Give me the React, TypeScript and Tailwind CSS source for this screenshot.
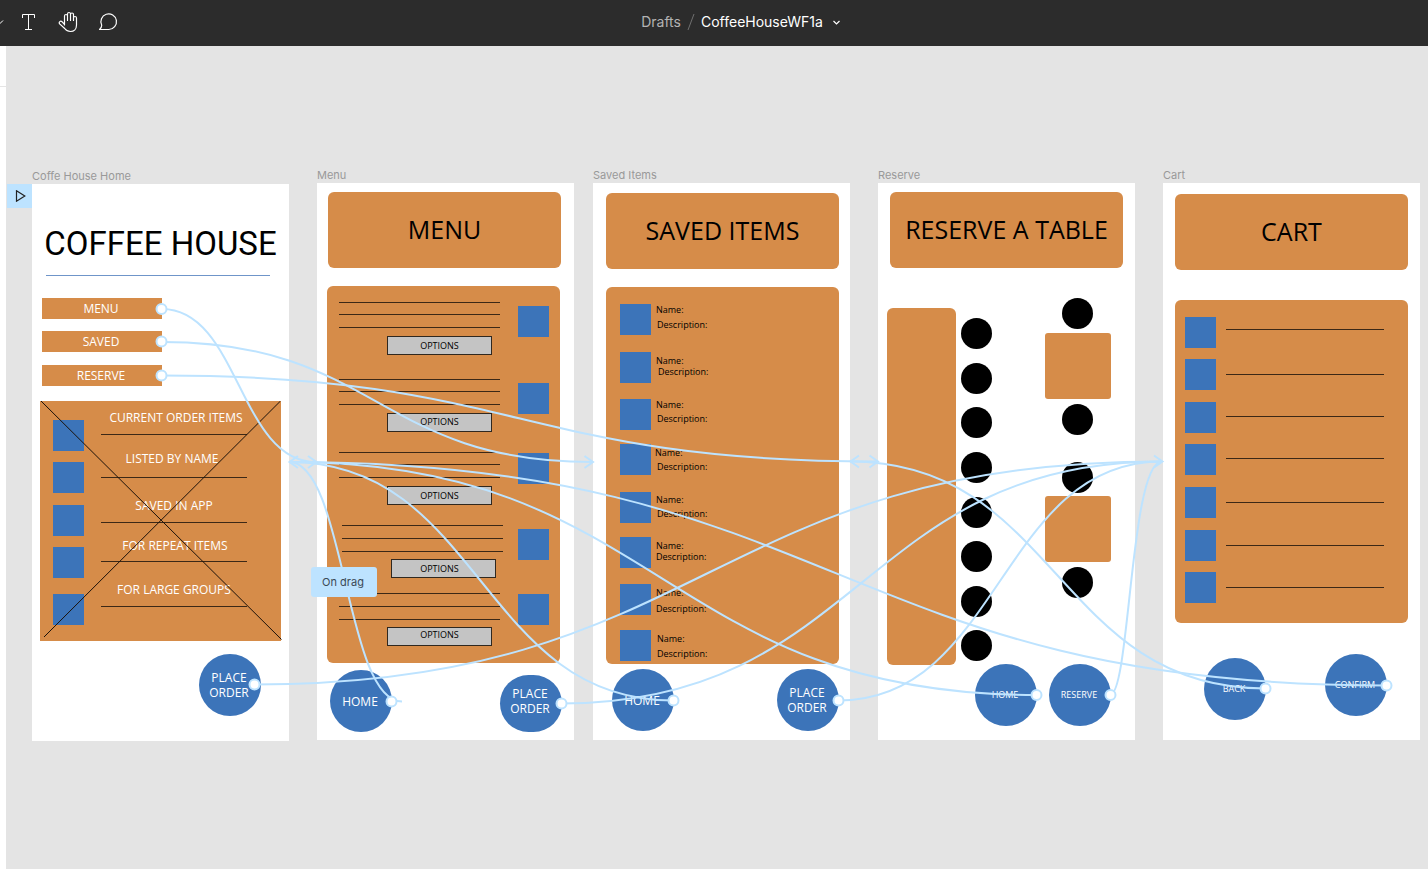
import type { ReactNode } from 'react';

type Point = [number, number];

const place = (x: number, y: number, w?: number, h?: number) => ({
  left: x,
  top: y,
  width: w,
  height: h,
});

function Artboard({ name, x, y, children }: { name: string; x: number; y: number; children: ReactNode }) {
  return (
    <section className="absolute h-[557px] w-[257px] bg-white" style={place(x, y)} aria-label={name}>
      <h2 className="absolute -top-4 left-0 font-[Inter,sans-serif] text-[11px] leading-4 whitespace-nowrap text-[#999999]">
        {name}
      </h2>
      {children}
    </section>
  );
}

function Block({ x, y, w, h, className }: { x: number; y: number; w: number; h: number; className: string }) {
  return <div className={`absolute ${className}`} style={place(x, y, w, h)} />;
}

function Squares({ x, ys }: { x: number; ys: number[] }) {
  return ys.map((y) => <Block key={y} x={x} y={y} w={31} h={31} className="bg-[#3c74b9]" />);
}

function Rules({ x, w, ys }: { x: number; w: number; ys: number[] }) {
  return ys.map((y) => <Block key={y} x={x} y={y} w={w} h={1} className="bg-[#3c2816]" />);
}

function Banner({ x, y, children }: { x: number; y: number; children: string }) {
  return (
    <h3
      className="absolute flex h-[76px] w-[233px] items-center justify-center rounded-md bg-[#d68c49] pb-0.5 text-[25px] leading-8 whitespace-nowrap text-black"
      style={place(x, y)}
    >
      {children}
    </h3>
  );
}

function RoundButton({
  x,
  y,
  h = 62,
  small = false,
  className = '',
  children,
}: {
  x: number;
  y: number;
  h?: number;
  small?: boolean;
  className?: string;
  children: ReactNode;
}) {
  return (
    <button
      type="button"
      className={`absolute flex w-[62px] items-center justify-center rounded-full bg-[#3c74b9] pr-0.5 text-center text-white ${
        small ? 'text-[9px] leading-3' : 'text-[12px] leading-[15px]'
      } ${className}`}
      style={place(x, y, undefined, h)}
    >
      <span>{children}</span>
    </button>
  );
}

const navBars = [
  { label: 'MENU', y: 114 },
  { label: 'SAVED', y: 147 },
  { label: 'RESERVE', y: 181 },
];

const orderNotes = [
  { text: 'CURRENT ORDER ITEMS', x: 144, y: 234 },
  { text: 'LISTED BY NAME', x: 140, y: 275 },
  { text: 'SAVED IN APP', x: 142, y: 322 },
  { text: 'FOR REPEAT ITEMS', x: 143, y: 362 },
  { text: 'FOR LARGE GROUPS', x: 142, y: 406 },
];

function HomeBoard() {
  return (
    <Artboard name="Coffe House Home" x={26} y={138}>
      <h3 className="absolute top-10 right-0 left-0 text-center font-[Roboto,sans-serif] text-[33px] leading-10 whitespace-nowrap text-black">
        COFFEE HOUSE
      </h3>
      <Block x={14} y={91} w={224} h={1} className="bg-[#6f95c9]" />
      {navBars.map((bar) => (
        <button
          key={bar.label}
          type="button"
          className="absolute h-[21px] w-[120px] bg-[#d68c49] pr-0.5 text-center text-[12px] leading-[21px] text-white"
          style={place(10, bar.y)}
        >
          {bar.label}
        </button>
      ))}
      <Block x={8} y={217} w={241} h={240} className="bg-[#d68c49]" />
      <Squares x={21} ys={[236, 278, 321, 363, 410]} />
      <Rules x={69} w={146} ys={[250, 293, 338, 377, 422]} />
      {orderNotes.map((note) => (
        <p
          key={note.text}
          className="absolute w-40 text-center text-[12px] leading-4 whitespace-nowrap text-white"
          style={place(note.x - 80, note.y - 8)}
        >
          {note.text}
        </p>
      ))}
      <svg className="absolute top-[217px] left-2" width="242" height="240" viewBox="0 0 242 240" fill="none" stroke="#1c120a" aria-hidden="true">
        <path d="M1 0L241.500 238.500M240.500 0L4 236" />
      </svg>
      <RoundButton x={167} y={470}>
        PLACE
        <br />
        ORDER
      </RoundButton>
    </Artboard>
  );
}

const optionBoxes = [
  { x: 70, y: 153, pad: '' },
  { x: 70, y: 230, pad: 'pb-0.5' },
  { x: 70, y: 303, pad: '' },
  { x: 74, y: 376, pad: 'pr-2' },
  { x: 70, y: 444, pad: 'pb-1' },
];

function MenuBoard() {
  return (
    <Artboard name="Menu" x={311} y={137}>
      <Banner x={11} y={9}>MENU</Banner>
      <Block x={10} y={103} w={233} h={377} className="rounded-md bg-[#d68c49]" />
      <Rules x={22} w={161} ys={[119, 131, 144, 196, 208, 221, 269, 281, 294, 410, 423, 436]} />
      <Rules x={25} w={161} ys={[342, 355, 368]} />
      <Squares x={201} ys={[123, 200, 270, 346, 411]} />
      {optionBoxes.map((box) => (
        <button
          key={box.y}
          type="button"
          className={`absolute flex h-[19px] w-[105px] items-center justify-center border border-[#30281f] bg-[#c4c4c4] text-[9px] leading-3 text-black ${box.pad}`}
          style={place(box.x, box.y)}
        >
          OPTIONS
        </button>
      ))}
      <RoundButton x={13} y={487}>HOME</RoundButton>
      <RoundButton x={183} y={492} h={57} className="pb-1.5">
        PLACE
        <br />
        ORDER
      </RoundButton>
    </Artboard>
  );
}

const savedRows = [
  { square: 121, name: [63, 127], description: [64, 142] },
  { square: 169, name: [63, 178], description: [65, 189] },
  { square: 216, name: [63, 222], description: [64, 236] },
  { square: 261, name: [62, 270], description: [64, 284] },
  { square: 309, name: [63, 317], description: [64, 331] },
  { square: 354, name: [63, 363], description: [63, 374] },
  { square: 401, name: [63, 410], description: [63, 426] },
  { square: 447, name: [64, 456], description: [64, 471] },
];

function SavedBoard() {
  return (
    <Artboard name="Saved Items" x={587} y={137}>
      <Banner x={13} y={10}>SAVED ITEMS</Banner>
      <Block x={13} y={104} w={233} h={377} className="rounded-md bg-[#d68c49]" />
      <Squares x={27} ys={savedRows.map((row) => row.square)} />
      {savedRows.map((row) => (
        <div key={row.square} className="text-[9px] leading-3 text-black">
          <p className="absolute" style={place(row.name[0], row.name[1] - 6)}>Name:</p>
          <p className="absolute" style={place(row.description[0], row.description[1] - 6)}>Description:</p>
        </div>
      ))}
      <RoundButton x={19} y={486}>HOME</RoundButton>
      <RoundButton x={184} y={486}>
        PLACE
        <br />
        ORDER
      </RoundButton>
    </Artboard>
  );
}

const stools: Point[] = [
  [83, 135], [83, 180], [83, 224], [83, 269], [83, 314], [83, 358], [83, 403], [83, 447],
  [184, 115], [184, 221], [184, 279], [184, 384],
];

function ReserveBoard() {
  return (
    <Artboard name="Reserve" x={872} y={137}>
      <Banner x={12} y={9}>RESERVE A TABLE</Banner>
      <Block x={9} y={125} w={69} h={357} className="rounded-md bg-[#d68c49]" />
      {stools.map(([x, y]) => (
        <Block key={`${x}-${y}`} x={x} y={y} w={31} h={31} className="rounded-full bg-black" />
      ))}
      <Block x={167} y={150} w={66} h={66} className="rounded-[3px] bg-[#d68c49]" />
      <Block x={167} y={313} w={66} h={66} className="rounded-[3px] bg-[#d68c49]" />
      <RoundButton x={97} y={481} small>HOME</RoundButton>
      <RoundButton x={171} y={481} small>RESERVE</RoundButton>
    </Artboard>
  );
}

function CartBoard() {
  return (
    <Artboard name="Cart" x={1157} y={137}>
      <Banner x={12} y={11}>CART</Banner>
      <Block x={12} y={117} w={233} h={323} className="rounded-md bg-[#d68c49]" />
      <Squares x={22} ys={[134, 176, 219, 261, 304, 347, 389]} />
      <Rules x={63} w={158} ys={[146, 191, 233, 275, 319, 362, 404]} />
      <RoundButton x={41} y={475} small>BACK</RoundButton>
      <RoundButton x={162} y={471} small>CONFIRM</RoundButton>
    </Artboard>
  );
}

const wires = [
  'M162 309C239 309 239 462 316 462',
  'M162 342C377 342 377 462 593 462',
  'M162 375.500C520 375.500 520 461.500 878 461.500',
  'M254 684.500C708 684.500 708 461.500 1162 461.500',
  'M402 701.500C345 701.500 345 462 289 462',
  'M561 703.500C862 703.500 862 461.500 1162 461.500',
  'M673 700.500C481 700.500 481 462 289 462',
  'M838 700.500C1000 700.500 1000 461.500 1162 461.500',
  'M1036 695C662 695 662 462 289 462',
  'M1110 695C1130 695 1130 461.500 1162 461.500',
  'M1265 688.500C1057 688.500 1057 461.500 850 461.500',
  'M1386 685.500C837 685.500 837 462 289 462',
];

const arrowHeads = [
  'M298 456L289.500 462L298 468',
  'M308 456L316.500 462L308 468',
  'M584.500 456L593 462L584.500 468',
  'M859 455.500L850.500 461.500L859 467.500',
  'M869.500 455.500L878 461.500L869.500 467.500',
  'M1154 455.500L1162.500 461.500L1154 467.500',
];

const handles: Point[] = [
  [161.5, 309], [161.5, 341.5], [161.5, 375.5], [254.5, 684.5], [391.5, 701.5], [561.5, 703.5],
  [673.5, 700.5], [838.5, 700.5], [1036.5, 695], [1110.5, 695], [1265.5, 688.5], [1386.5, 685.5],
];

function Connections() {
  return (
    <svg className="pointer-events-none absolute top-0 left-0" width="1400" height="800" viewBox="6 46 1400 800" fill="none" stroke="#bde3ff" strokeWidth="2" aria-hidden="true">
      {[...wires, ...arrowHeads].map((d) => (
        <path key={d} d={d} />
      ))}
      {handles.map(([x, y]) => (
        <circle key={`${x}-${y}`} cx={x} cy={y} r="5" fill="white" />
      ))}
    </svg>
  );
}

function Toolbar() {
  return (
    <header className="flex h-[46px] shrink-0 items-center bg-[#2c2c2c] pb-0.5 font-[Inter,sans-serif] text-white">
      <div className="flex h-full items-center">
        <button type="button" aria-label="More shapes" className="h-full w-2">
          <svg width="8" height="10" viewBox="0 0 8 10" fill="none" stroke="currentColor" aria-hidden="true">
            <path d="M-3 3.500L0 6.500L3 3.500" />
          </svg>
        </button>
        <button type="button" aria-label="Text" className="flex h-full w-10 items-center justify-center">
          <svg width="20" height="20" viewBox="0 0 20 20" fill="none" stroke="currentColor" aria-hidden="true">
            <path d="M4.500 6V2.500H16.500V6M10.500 2.500V17.500M7 17.500H14" />
          </svg>
        </button>
        <button type="button" aria-label="Hand tool" className="flex h-full w-10 items-center justify-center">
          <svg width="20" height="22" viewBox="0 0 20 22" fill="none" stroke="currentColor" strokeWidth="1.2" strokeLinecap="round" strokeLinejoin="round" aria-hidden="true">
            <path d="M6.500 14V5a1.500 1.500 0 0 1 3 0V9.500M9.500 5V3a1.500 1.500 0 0 1 3 0V9.500M12.500 3.500a1.500 1.500 0 0 1 3 0V9.500M15.500 7a1.500 1.500 0 0 1 3 0V14c0 4-2.500 6.500-6 6.500c-2.600 0-4.400-1.100-5.800-3L1.600 12.900C.4 11.100 2.600 9.400 4 10.700L6.500 13.500" />
          </svg>
        </button>
        <button type="button" aria-label="Comments" className="flex h-full w-10 items-center justify-center">
          <svg width="20" height="20" viewBox="0 0 20 20" fill="none" stroke="currentColor" strokeWidth="1.2" strokeLinejoin="round" aria-hidden="true">
            <path d="M1.500 17.500H10.800A7.800 7.800 0 1 0 3.700 13.200C3.700 15 2.800 16.500 1.500 17.500Z" />
          </svg>
        </button>
      </div>
      <div className="flex flex-1 items-center justify-center pr-[75px] text-[14px] leading-5">
        <a href="#drafts" className="text-[#b3b3b3]">Drafts</a>
        <svg className="mx-1.5" width="8" height="16" viewBox="0 0 8 16" fill="none" stroke="#707070" aria-hidden="true">
          <path d="M7 0L1 16" />
        </svg>
        <button type="button" className="flex items-center gap-2.5">
          CoffeeHouseWF1a
          <svg width="7" height="5" viewBox="0 0 7 5" fill="none" stroke="currentColor" strokeWidth="1.2" aria-hidden="true">
            <path d="M.5 1L3.500 4L6.500 1" />
          </svg>
        </button>
      </div>
    </header>
  );
}

export default function App() {
  return (
    <div className="flex h-screen flex-col font-['Open_Sans',sans-serif]">
      <Toolbar />
      <div className="flex min-h-0 flex-1">
        <aside className="w-1.5 shrink-0 bg-white">
          <div className="h-10" />
          <div className="h-px bg-[#e5e5e5]" />
        </aside>
        <main className="relative flex-1 overflow-auto bg-[#e4e4e4]">
          <HomeBoard />
          <MenuBoard />
          <SavedBoard />
          <ReserveBoard />
          <CartBoard />
          <Connections />
          <button
            type="button"
            aria-label="Present from this frame"
            className="absolute flex h-6 w-[25px] items-center justify-center bg-[#bde3ff] pl-0.5 text-[#222222]"
            style={place(1, 138)}
          >
            <svg width="11" height="12" viewBox="0 0 11 12" fill="none" stroke="currentColor" strokeWidth="1.2" aria-hidden="true">
              <path d="M1.500 .8L9.800 6L1.500 11.200Z" />
            </svg>
          </button>
          <div
            className="absolute flex h-[30px] w-[66px] items-center justify-center rounded-[3px] bg-[#bde3ff] pr-0.5 font-[Inter,sans-serif] text-[11px] leading-4 text-[#3b4a56]"
            style={place(305, 521)}
          >
            On drag
          </div>
        </main>
      </div>
    </div>
  );
}
